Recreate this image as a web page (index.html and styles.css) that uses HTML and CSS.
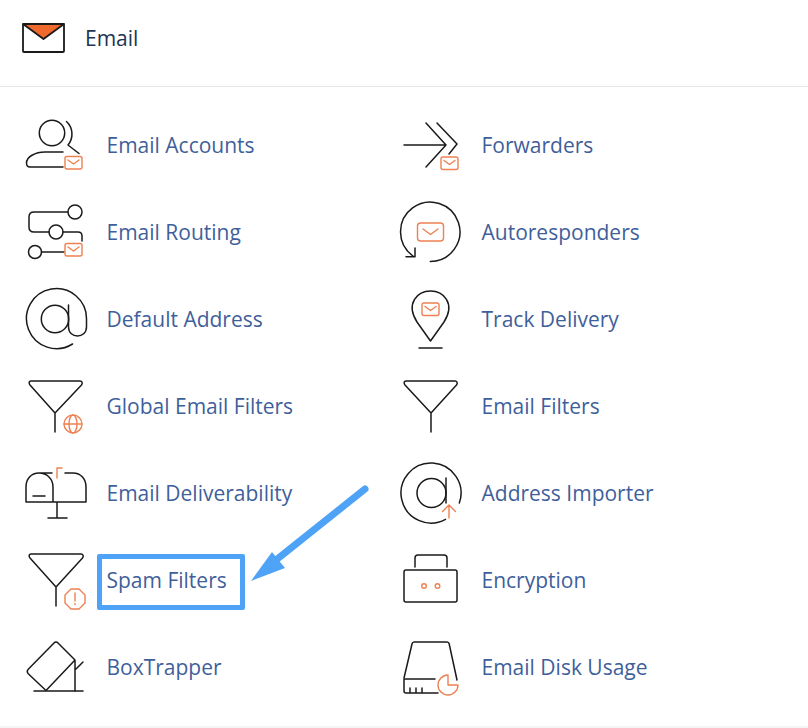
FILE: index.html
```html
<!DOCTYPE html>
<html lang="en">
<head>
    <meta charset="UTF-8">
    <title>Email</title>
    <link rel="stylesheet" href="styles.css">
</head>
<body>
<div class="page">
    <div class="head">
        <svg class="head-icon" viewBox="22 24 44 30" width="44" height="30">
            <path class="flap" d="M23 25H64L43.500 40Z"/>
            <rect class="line line-bold" x="23" y="25" width="41" height="28" rx="1"/>
            <path class="line line-bold" d="M23 25L43.500 40L64 25"/>
        </svg>
        <h2 class="head-title">Email</h2>
    </div>

    <ul class="list">
        <li class="item">
            <svg class="icon" viewBox="24 113 64 64" width="64" height="64">
                <circle class="line" cx="52" cy="133" r="12.700"/>
                <path class="line" d="M66.500 121.500C73.500 128 73.500 138.500 68 145L79 153.500"/>
                <path class="line" d="M63 152H45C35 152 26.500 157 26.500 163C26.500 165.500 28 167 30 167H63"/>
                <g class="mark">
                    <rect x="65" y="156.500" width="17" height="12.500" rx="2"/>
                    <path d="M68 160L73.500 164L79 160"/>
                </g>
            </svg>
            <a class="name" href="#">Email Accounts</a>
        </li>
        <li class="item">
            <svg class="icon" viewBox="399 113 64 64" width="64" height="64">
                <path class="line" d="M404 145H446M426 123L446 145L426 167M437 123L457 144L449 154"/>
                <g class="mark">
                    <rect x="441" y="157" width="17" height="12.500" rx="2"/>
                    <path d="M444 160.500L449.500 164.500L455 160.500"/>
                </g>
            </svg>
            <a class="name" href="#">Forwarders</a>
        </li>
        <li class="item">
            <svg class="icon" viewBox="24 200 64 64" width="64" height="64">
                <circle class="line" cx="75" cy="212" r="7"/>
                <circle class="line" cx="56" cy="232" r="7"/>
                <circle class="line" cx="35" cy="252" r="6.500"/>
                <path class="line" d="M68 212H34C31 212 29 214 29 217V227C29 230 31 232 34 232H49M63 232H78C80.500 232 82 233.500 82 236V241M41.500 252H64"/>
                <g class="mark">
                    <rect x="65" y="243.500" width="17" height="12.500" rx="2"/>
                    <path d="M68 247L73.500 251L79 247"/>
                </g>
            </svg>
            <a class="name" href="#">Email Routing</a>
        </li>
        <li class="item">
            <svg class="icon" viewBox="399 200 64 64" width="64" height="64">
                <path class="line" d="M430.300 261.500A29.700 29.700 0 1 0 413 256M415 248V256.800H406"/>
                <g class="mark">
                    <rect x="417.500" y="223" width="26" height="18" rx="3"/>
                    <path d="M423 229L430.500 234.500L438 229"/>
                </g>
            </svg>
            <a class="name" href="#">Autoresponders</a>
        </li>
        <li class="item">
            <svg class="icon" viewBox="24 287 64 64" width="64" height="64">
                <circle class="line" cx="55" cy="319" r="13.700"/>
                <path class="line" d="M72.500 344A30 30 0 1 1 86.500 319V327C86.500 339 68.500 339 68.500 327V305"/>
            </svg>
            <a class="name" href="#">Default Address</a>
        </li>
        <li class="item">
            <svg class="icon" viewBox="399 287 64 64" width="64" height="64">
                <path class="line" d="M430.500 341L417 322C405 303 418 291 430.500 291C443 291 456 303 444 322Z"/>
                <path class="line" d="M419 348H442"/>
                <g class="mark">
                    <rect x="422" y="303" width="17" height="12.500" rx="2"/>
                    <path d="M425 306.500L430.500 310.500L436 306.500"/>
                </g>
            </svg>
            <a class="name" href="#">Track Delivery</a>
        </li>
        <li class="item">
            <svg class="icon" viewBox="24 374 64 64" width="64" height="64">
                <path class="line" d="M31 381H80C82 381 83 383 81.500 385L55 413L30 385C28.500 383 29 381 31 381ZM55 413V432"/>
                <g class="mark">
                    <circle cx="73" cy="424" r="9"/>
                    <ellipse cx="73" cy="424" rx="4" ry="9"/>
                    <path d="M64 424H82"/>
                </g>
            </svg>
            <a class="name" href="#">Global Email Filters</a>
        </li>
        <li class="item">
            <svg class="icon" viewBox="399 374 64 64" width="64" height="64">
                <path class="line" d="M406 381H455C457 381 458 383 456.500 385L431 413L405 385C403.500 383 404 381 406 381ZM431 413V432"/>
            </svg>
            <a class="name" href="#">Email Filters</a>
        </li>
        <li class="item">
            <svg class="icon" viewBox="24 461 64 64" width="64" height="64">
                <path class="line" d="M26 502H86V487C86 479 81 473 73 473H65M26 502V487C26 479 31 473 39 473H52M39 473C47 473 53 479 53 487V502M57 502V518M48 518H67M33 496H45"/>
                <path class="mark" d="M57 478V468H62"/>
            </svg>
            <a class="name" href="#">Email Deliverability</a>
        </li>
        <li class="item">
            <svg class="icon" viewBox="399 461 64 64" width="64" height="64">
                <path class="line" d="M445.500 519.300A30 30 0 1 1 459.300 503"/>
                <circle class="line" cx="431.500" cy="493" r="14.500"/>
                <path class="line" d="M446 478V503"/>
                <path class="mark" d="M449 518V505M442.500 511.500L449 505L455.500 511.500"/>
            </svg>
            <a class="name" href="#">Address Importer</a>
        </li>
        <li class="item">
            <svg class="icon" viewBox="24 548 64 64" width="64" height="64">
                <path class="line" d="M31 554H81C83 554 84 556 82.500 558L56 587L30 558C28.500 556 29 554 31 554ZM56 587V606"/>
                <g class="mark">
                    <path d="M71 589H79L85 595V603L79 609H71L65 603V595Z"/>
                    <path d="M75 593V601M75 603.500V604.500"/>
                </g>
            </svg>
            <a class="name name-marked" href="#">Spam Filters</a>
        </li>
        <li class="item">
            <svg class="icon" viewBox="399 548 64 64" width="64" height="64">
                <path class="line" d="M415 567V558C415 556 416 555 418 555H444C446 555 447 556 447 558V567"/>
                <rect class="line" x="404" y="570" width="53" height="32" rx="2"/>
                <circle class="mark" cx="424" cy="586" r="2.300"/>
                <circle class="mark" cx="437.500" cy="586" r="2.300"/>
            </svg>
            <a class="name" href="#">Encryption</a>
        </li>
        <li class="item">
            <svg class="icon" viewBox="24 635 64 64" width="64" height="64">
                <path class="line" d="M75 660L58 643C57 641.500 55 641.500 54 643L28.500 669C27 670.500 27 672.500 28.500 674L46 690.500L75 660ZM75 660V691M76 669L83 662"/>
                <path class="line" d="M34 691H83"/>
            </svg>
            <a class="name" href="#">BoxTrapper</a>
        </li>
        <li class="item">
            <svg class="icon" viewBox="399 635 64 64" width="64" height="64">
                <path class="line" d="M404 678L412 644C412.300 642.800 413 642 414 642H447C448 642 449 642.800 449.200 644L457 680"/>
                <path class="line" d="M435 679H404V691C404 692.500 405 693 406 693H438M410 693V688M416 693V688M422 693V688"/>
                <path class="mark" d="M448 675A10 10 0 1 0 458 685H448Z"/>
            </svg>
            <a class="name" href="#">Email Disk Usage</a>
        </li>
    </ul>

    <svg class="pointer" viewBox="245 480 130 110" width="130" height="110">
        <path class="pointer-line" d="M365 489L276 560"/>
        <path class="pointer-head" d="M251 581L272 552L285 568Z"/>
    </svg>
</div>
</body>
</html>
```

FILE: styles.css
```css
* {
    margin: 0;
    padding: 0;
    list-style: none;
    box-sizing: border-box;
}

body {
    background: #fff;
    font-family: "Open Sans", "Liberation Sans", sans-serif;
}

.page {
    position: relative;
    height: 728px;
    overflow: hidden;
    border-bottom: 2px solid #f3f4f6;
}

.head {
    display: flex;
    align-items: center;
    gap: 19px;
    height: 87px;
    padding: 0 0 11px 22px;
    border-bottom: 1px solid #e6e7e9;
}
.head-title {
    font-size: 21px;
    font-weight: 400;
    color: #1c3553;
}
.flap {
    fill: #f0692c;
}

.list {
    display: grid;
    grid-template-columns: 375px 375px;
    grid-auto-rows: 87px;
    padding-top: 14.500px;
}
.item {
    display: flex;
    align-items: center;
    gap: 18.500px;
    padding-left: 24px;
}
.icon {
    flex: none;
}
.line {
    fill: none;
    stroke: #1a1a1a;
    stroke-width: 1.500;
    stroke-linecap: round;
    stroke-linejoin: round;
}
.line-bold {
    stroke-width: 1.800;
}
.mark,
.mark * {
    fill: none;
    stroke: #ee8152;
    stroke-width: 1.400;
    stroke-linecap: round;
    stroke-linejoin: round;
}

.name {
    position: relative;
    font-size: 21px;
    line-height: 30px;
    color: #3f5f9b;
    text-decoration: none;
}
.name-marked::after {
    content: "";
    position: absolute;
    left: -10px;
    right: -18px;
    top: -11px;
    bottom: -15px;
    border: 5px solid #4fa3f7;
    border-radius: 2px;
}

.pointer {
    position: absolute;
    left: 245px;
    top: 480px;
}
.pointer-line {
    fill: none;
    stroke: #4fa3f7;
    stroke-width: 7;
    stroke-linecap: round;
}
.pointer-head {
    fill: #4fa3f7;
}
```
